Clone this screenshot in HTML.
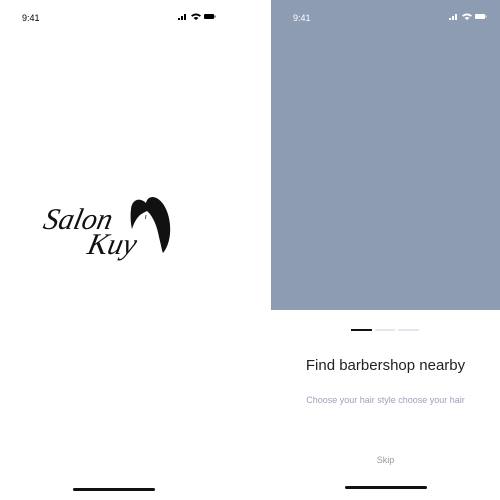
<!DOCTYPE html>
<html><head><style>
body{margin:0;width:500px;height:500px;background:#fff;position:relative;overflow:hidden;font-family:"Liberation Sans",sans-serif}
.a{position:absolute}
.t{font-size:9px;color:#000}
.s{font-family:'Liberation Serif',serif;font-style:italic;font-size:30px;color:#111;transform:skewX(-12deg)}
</style></head><body>
<div class="a t" style="left:22px;top:13px">9:41</div>
<div class="a" style="left:178px;top:13px;display:flex;gap:3px;align-items:flex-end">
 <svg width="10" height="7"><rect x="0" y="5" width="2" height="2"/><rect x="3" y="3" width="2" height="4"/><rect x="6" y="1" width="2" height="6"/></svg>
 <svg width="10" height="7" viewBox="0 0 10 7"><path d="M0 2.5Q5 -1.5 10 2.5L8.7 3.8Q5 1 1.3 3.8Z M2.5 5Q5 3 7.5 5L5 7Z"/></svg>
 <svg width="12" height="7"><rect x="0" y="1" width="10" height="5" rx="1"/><rect x="10.5" y="2.5" width="1" height="2"/></svg>
</div>
<div class="a s" style="left:44px;top:203px">Salon</div>
<div class="a s" style="left:88px;top:228px">Kuy</div>
<svg class="a" style="left:126px;top:195px" width="46" height="62" viewBox="0 0 46 62">
<path d="M20 8C14 2 6 4 5 14C4 22 5 30 6 34C8 28 10 24 14 20C17 18 19 17 21 16C26 20 31 30 33 42C35 50 36 56 37 58C42 52 45 42 44 30C43 16 36 3 27 2C23 2 21 4 20 8Z" fill="#111"/>
<path d="M20 20L19.5 24" stroke="#333" stroke-width="0.8"/>
</svg>
<div class="a" style="left:73px;top:488px;width:82px;height:3px;background:#111;border-radius:2px"></div>

<div class="a" style="left:271px;top:0;width:229px;height:310px;background:#8e9cb3"></div>
<div class="a t" style="left:293px;top:13px;color:#fff">9:41</div>
<div class="a" style="left:449px;top:13px;display:flex;gap:3px;align-items:flex-end;fill:#fff">
 <svg width="10" height="7"><rect x="0" y="5" width="2" height="2"/><rect x="3" y="3" width="2" height="4"/><rect x="6" y="1" width="2" height="6"/></svg>
 <svg width="10" height="7" viewBox="0 0 10 7"><path d="M0 2.5Q5 -1.5 10 2.5L8.7 3.8Q5 1 1.3 3.8Z M2.5 5Q5 3 7.5 5L5 7Z"/></svg>
 <svg width="12" height="7"><rect x="0" y="1" width="10" height="5" rx="1"/><rect x="10.5" y="2.5" width="1" height="2"/></svg>
</div>
<div class="a" style="left:351px;top:329px;width:21px;height:2px;background:#111"></div>
<div class="a" style="left:375px;top:329px;width:20px;height:2px;background:#e2e6ee"></div>
<div class="a" style="left:398px;top:329px;width:21px;height:2px;background:#e2e6ee"></div>
<div class="a" style="left:271px;top:357px;width:229px;text-align:center;font-size:15px;color:#222">Find barbershop nearby</div>
<div class="a" style="left:271px;top:395px;width:229px;text-align:center;font-size:9px;color:#9aa3b8">Choose your hair style choose your hair</div>
<div class="a" style="left:271px;top:455px;width:229px;text-align:center;font-size:9px;color:#999">Skip</div>
<div class="a" style="left:345px;top:486px;width:82px;height:3px;background:#111;border-radius:2px"></div>
</body></html>
